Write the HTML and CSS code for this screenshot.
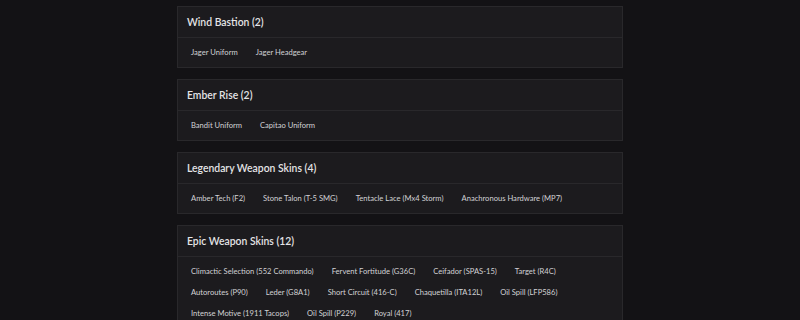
FILE: index.html
```html
<!DOCTYPE html>
<html>
<head>
<meta charset="utf-8">
<link rel="stylesheet" href="styles.css">
</head>
<body>
<main class="list">
  <section class="card">
    <h2 class="card-title">Wind Bastion (2)</h2>
    <div class="card-body">
      <span class="item">Jager Uniform</span>
      <span class="item">Jager Headgear</span>
    </div>
  </section>
  <section class="card">
    <h2 class="card-title">Ember Rise (2)</h2>
    <div class="card-body">
      <span class="item">Bandit Uniform</span>
      <span class="item">Capitao Uniform</span>
    </div>
  </section>
  <section class="card">
    <h2 class="card-title">Legendary Weapon Skins (4)</h2>
    <div class="card-body">
      <span class="item">Amber Tech (F2)</span>
      <span class="item">Stone Talon (T-5 SMG)</span>
      <span class="item">Tentacle Lace (Mx4 Storm)</span>
      <span class="item">Anachronous Hardware (MP7)</span>
    </div>
  </section>
  <section class="card">
    <h2 class="card-title">Epic Weapon Skins (12)</h2>
    <div class="card-body">
      <span class="item">Climactic Selection (552 Commando)</span>
      <span class="item">Fervent Fortitude (G36C)</span>
      <span class="item">Ceifador (SPAS-15)</span>
      <span class="item">Target (R4C)</span>
      <span class="item">Autoroutes (P90)</span>
      <span class="item">Leder (G8A1)</span>
      <span class="item">Short Circuit (416-C)</span>
      <span class="item">Chaquetilla (ITA12L)</span>
      <span class="item">Oil Spill (LFP586)</span>
      <span class="item">Intense Motive (1911 Tacops)</span>
      <span class="item">Oil Spill (P229)</span>
      <span class="item">Royal (417)</span>
    </div>
  </section>
</main>
</body>
</html>
```
FILE: styles.css
```css
html, body {
  margin: 0;
  padding: 0;
  background: #131215;
}
body {
  font-family: "Lato", "Noto Sans", sans-serif;
  color: #e2e2e4;
}
.list {
  width: 446px;
  margin: 0 auto;
  padding-top: 6px;
  display: flex;
  flex-direction: column;
  gap: 11px;
}
.card {
  background: #1c1b1e;
  border: 1px solid #29282b;
}
.card-title {
  margin: 0;
  height: 30px;
  display: flex;
  align-items: center;
  padding: 0 9px;
  font-size: 10.4px;
  font-weight: 600;
  border-bottom: 1px solid #29282b;
  color: #e4e4e6;
}
.card-body {
  display: flex;
  flex-wrap: wrap;
  padding: 4px 4px 4px;
}
.item {
  height: 21px;
  line-height: 21px;
  padding: 0 9px;
  font-size: 7.6px;
  color: #d2d2d5;
}
```
